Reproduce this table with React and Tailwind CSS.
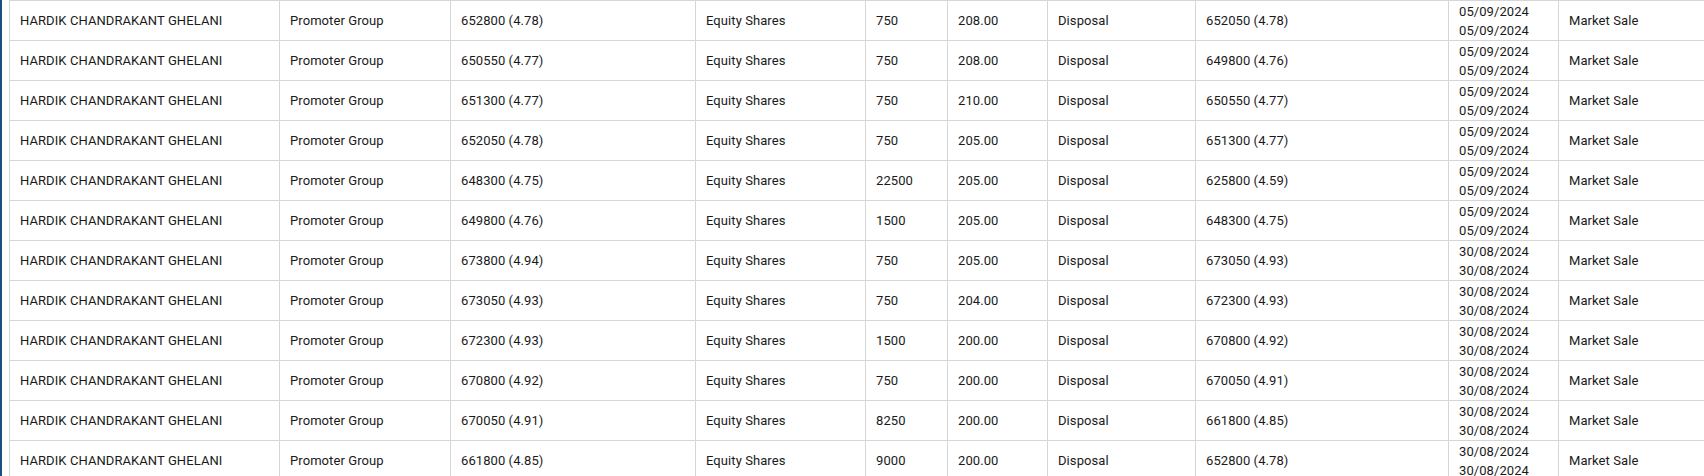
const rows = [
  ["652800 (4.78)", "750", "208.00", "652050 (4.78)", "05/09/2024"],
  ["650550 (4.77)", "750", "208.00", "649800 (4.76)", "05/09/2024"],
  ["651300 (4.77)", "750", "210.00", "650550 (4.77)", "05/09/2024"],
  ["652050 (4.78)", "750", "205.00", "651300 (4.77)", "05/09/2024"],
  ["648300 (4.75)", "22500", "205.00", "625800 (4.59)", "05/09/2024"],
  ["649800 (4.76)", "1500", "205.00", "648300 (4.75)", "05/09/2024"],
  ["673800 (4.94)", "750", "205.00", "673050 (4.93)", "30/08/2024"],
  ["673050 (4.93)", "750", "204.00", "672300 (4.93)", "30/08/2024"],
  ["672300 (4.93)", "1500", "200.00", "670800 (4.92)", "30/08/2024"],
  ["670800 (4.92)", "750", "200.00", "670050 (4.91)", "30/08/2024"],
  ["670050 (4.91)", "8250", "200.00", "661800 (4.85)", "30/08/2024"],
  ["661800 (4.85)", "9000", "200.00", "652800 (4.78)", "30/08/2024"],
];

// widths measured border to border
const cols = ["w-[270px]", "w-[171px]", "w-[245px]", "w-[170px]", "w-[82px]", "w-[100px]", "w-[148px]", "w-[253px]", "w-[110px]", ""];

function Cell({ children }) {
  return (
    <td className="border border-[#d6d6d6] px-[10px] py-0 align-middle whitespace-nowrap">{children}</td>
  );
}

export default function App() {
  return (
    <div className="w-[1704px] h-[476px] overflow-hidden bg-white">
      <div className="h-full border-l-2 border-[#1d4e79] pl-[7px]">
        <table
          className="table-fixed border-collapse w-[1720px] text-[13px] leading-5 tracking-[0.08px] text-[#1a1a1a]"
          style={{ fontFamily: "Roboto, 'Liberation Sans', sans-serif" }}
        >
          <colgroup>
            {cols.map((c, i) => (
              <col key={i} className={c} />
            ))}
          </colgroup>
          <tbody>
            {rows.map((r, i) => (
              <tr key={i} className="h-10">
                <Cell>HARDIK CHANDRAKANT GHELANI</Cell>
                <Cell>Promoter Group</Cell>
                <Cell>{r[0]}</Cell>
                <Cell>Equity Shares</Cell>
                <Cell>{r[1]}</Cell>
                <Cell>{r[2]}</Cell>
                <Cell>Disposal</Cell>
                <Cell>{r[3]}</Cell>
                <Cell>
                  <div className="leading-[19px]">{r[4]}</div>
                  <div className="leading-[19px]">{r[4]}</div>
                </Cell>
                <Cell>Market Sale</Cell>
              </tr>
            ))}
          </tbody>
        </table>
      </div>
    </div>
  );
}
